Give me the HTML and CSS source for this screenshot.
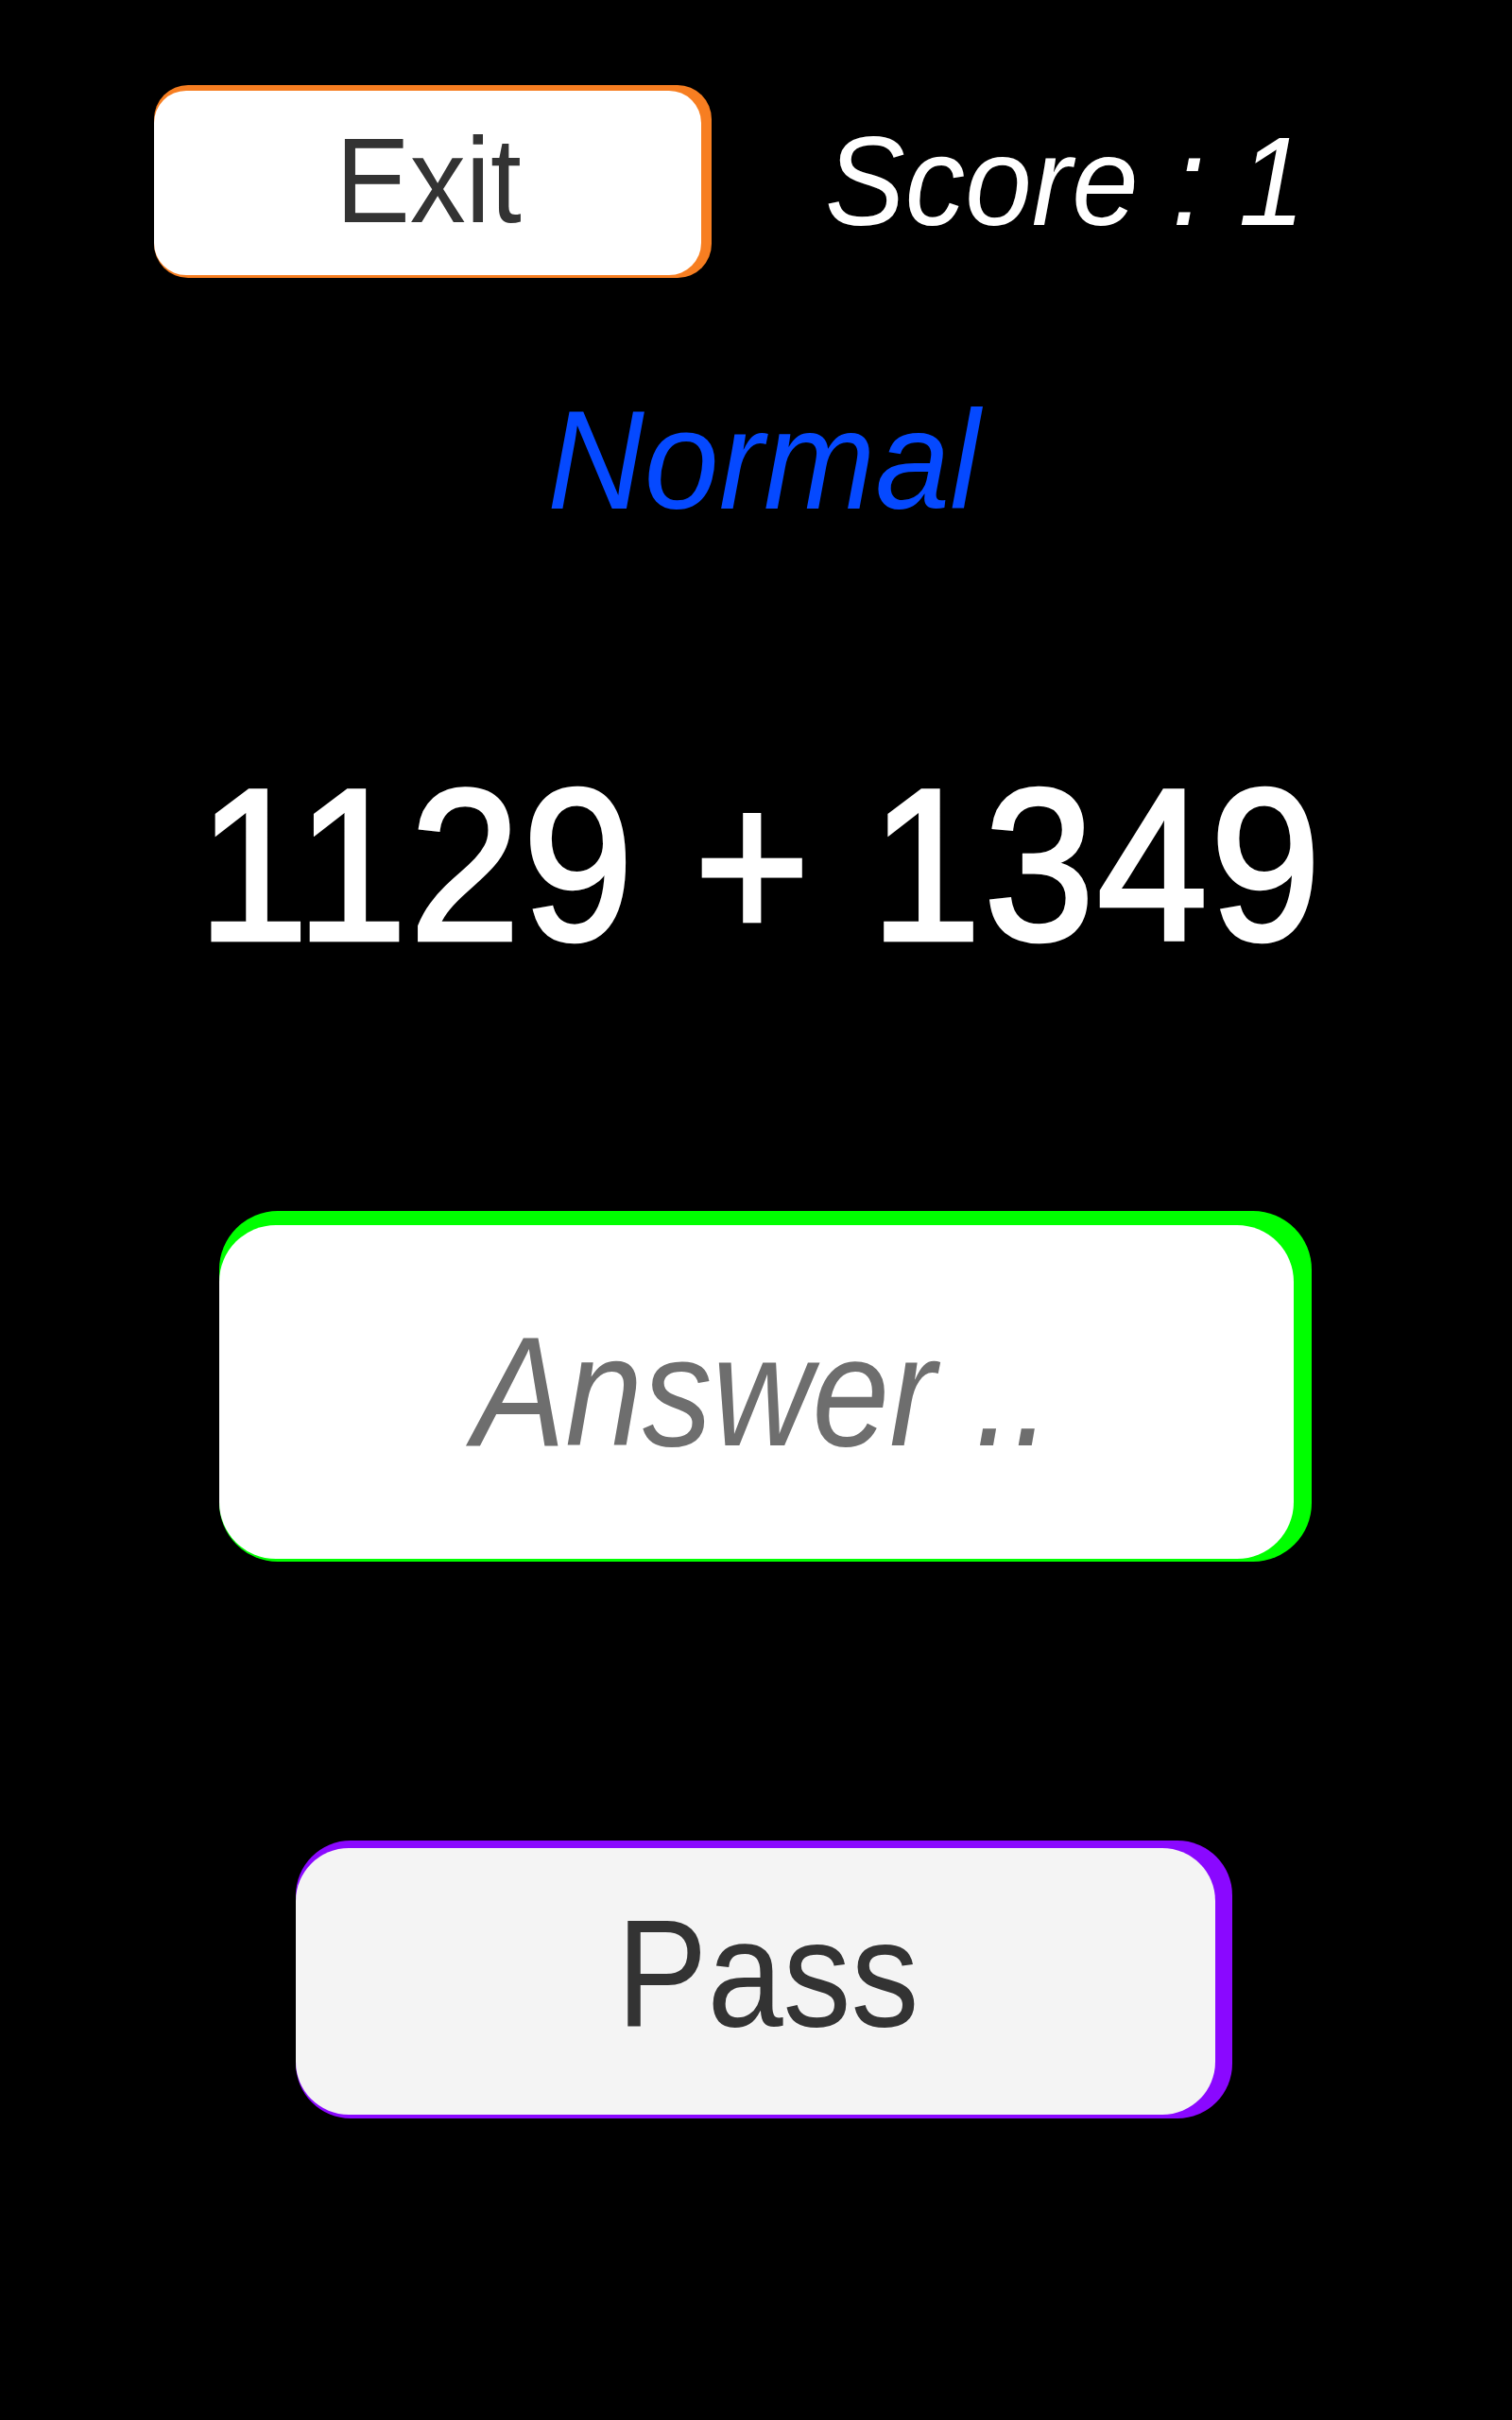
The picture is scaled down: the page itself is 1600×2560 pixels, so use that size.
FILE: index.html
```html
<!DOCTYPE html>
<html lang="en">
<head>
<meta charset="utf-8">
<title>Math Game</title>
<link rel="stylesheet" href="styles.css">
</head>
<body>
<div class="screen">
  <div class="top-row">
    <div class="btn-frame exit-frame">
      <div class="btn-face exit-face"><span class="stretch exit-label">Exit</span></div>
    </div>
    <div class="score"><span class="stretch">Score : 1</span></div>
  </div>
  <div class="level"><span class="stretch">Normal</span></div>
  <div class="equation"><span class="stretch">1129 + 1349</span></div>
  <div class="btn-frame answer-frame">
    <div class="btn-face answer-face"><span class="stretch answer-label">Answer ..</span></div>
  </div>
  <div class="btn-frame pass-frame">
    <div class="btn-face pass-face"><span class="stretch pass-label">Pass</span></div>
  </div>
</div>
</body>
</html>
```

FILE: styles.css
```css
html, body {
  margin: 0;
  padding: 0;
  background: #000;
}

body {
  width: 1600px;
  height: 2560px;
  font-family: "Liberation Sans", Arial, sans-serif;
  overflow: hidden;
}

.screen {
  display: flex;
  flex-direction: column;
}

.stretch {
  display: inline-block;
  transform: scaleY(1.12);
  white-space: pre;
}

.top-row {
  display: flex;
  align-items: center;
  padding-top: 90px;
  padding-left: 163px;
  height: 204px;
}

.btn-frame {
  display: flex;
  box-sizing: border-box;
}

.btn-face {
  flex: 1;
  display: flex;
  align-items: center;
  justify-content: center;
}

.exit-frame {
  width: 590px;
  height: 204px;
  background: #f77e21;
  border-radius: 36px;
  padding: 6px 11px 3px 0;
}

.exit-face {
  background: #fff;
  border-radius: 34px;
  padding-bottom: 6px;
}

.exit-label {
  font-size: 118px;
  line-height: 1;
  color: #333;
  margin-left: 2px;
}

.exit-face .stretch {
  transform: scaleY(1.08);
}

.score {
  margin-left: 120px;
  font-size: 127px;
  line-height: 1;
  font-style: italic;
  color: #fff;
}

.score .stretch {
  transform: scaleY(1.05);
}

.level {
  margin-top: 122px;
  height: 141px;
  text-align: center;
  font-size: 142px;
  line-height: 1;
  font-style: italic;
  color: #0549ff;
  padding-left: 16px;
}

.level .stretch {
  transform: scaleY(1.05);
}

.equation {
  margin-top: 254px;
  height: 205px;
  text-align: center;
  font-size: 210px;
  line-height: 1;
  color: #fff;
  padding-left: 10px;
  letter-spacing: 3px;
}

.equation .stretch {
  transform: scaleY(1.09);
  -webkit-text-stroke: 4px #fff;
}

.answer-frame {
  margin-top: 265px;
  margin-left: 232px;
  width: 1156px;
  height: 371px;
  background: #00ff00;
  border-radius: 62px;
  padding: 15px 19px 3px 0;
}

.answer-face {
  background: #fff;
  border-radius: 60px;
  padding-left: 12px;
}

.answer-label {
  font-size: 147px;
  line-height: 1;
  font-style: italic;
  color: #6e6e6e;
}

.pass-frame {
  margin-top: 295px;
  margin-left: 313px;
  width: 991px;
  height: 294px;
  background: #8a08ff;
  border-radius: 58px;
  padding: 8px 18px 4px 0;
}

.pass-face {
  background: #f4f4f4;
  border-radius: 56px;
  padding-left: 26px;
  padding-bottom: 16px;
}

.pass-label {
  font-size: 144px;
  line-height: 1;
  color: #333;
}
```
